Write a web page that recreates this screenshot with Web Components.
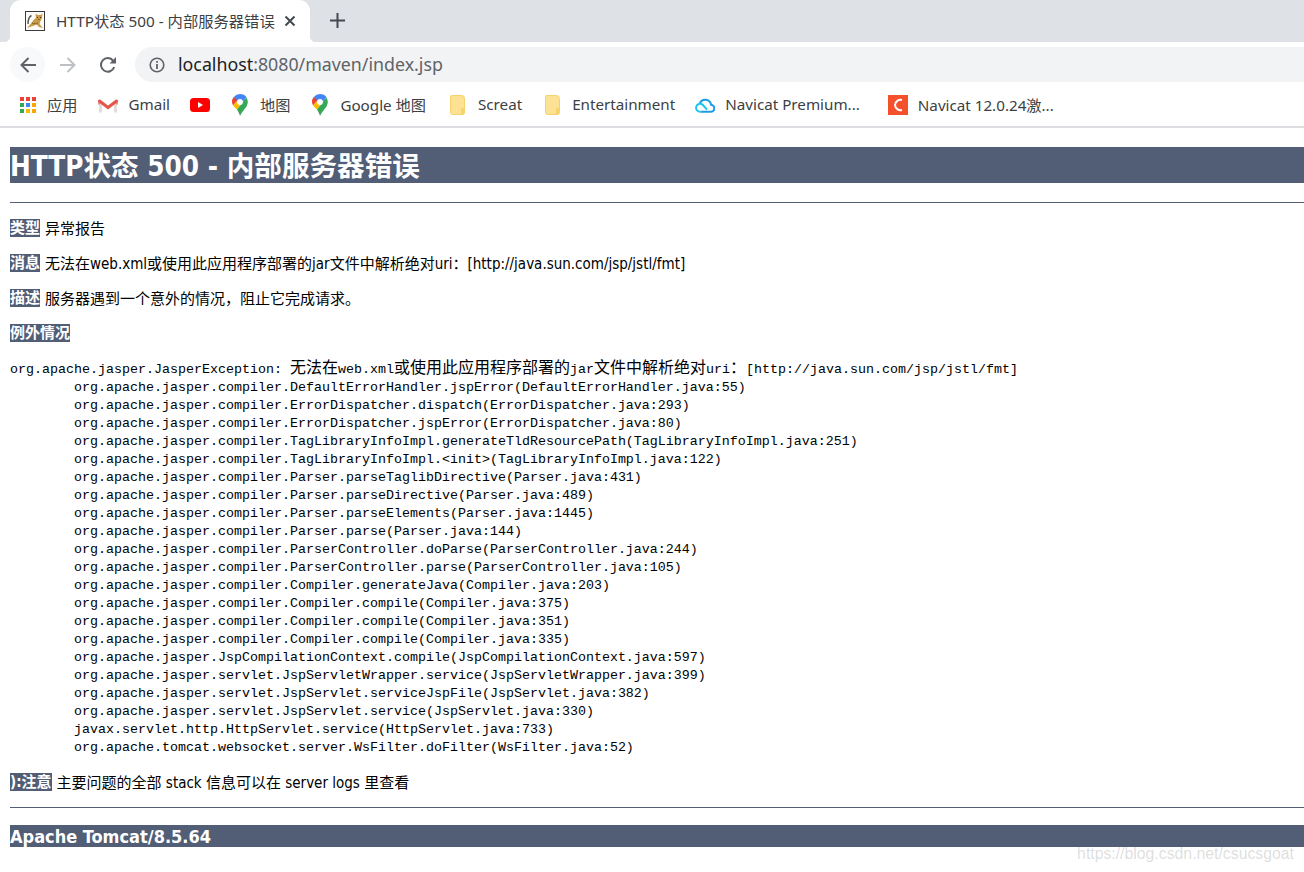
<!DOCTYPE html>
<html lang="zh">
<head>
<meta charset="utf-8">
<title>HTTP状态 500 - 内部服务器错误</title>
<style>
    html, body { margin: 0; padding: 0; background: #fff; overflow: hidden; height: 872px; }
    body { position: relative; }
</style>
</head>
<body>
<browser-tabs></browser-tabs>
<browser-toolbar></browser-toolbar>
<browser-bookmarks></browser-bookmarks>
<error-page></error-page>
<page-watermark>https://blog.csdn.net/csucsgoat</page-watermark>

<script>
const UI_FONT = `"Noto Sans", "Noto Sans CJK SC", sans-serif`;
const PAGE_FONT = `"DejaVu Sans Condensed", "Noto Sans CJK SC", sans-serif`;

const MAPS_PIN = `
    <svg width="16" height="22" viewBox="0 0 16 22">
        <path d="M8 0a8 8 0 0 1 6.500 3.300L11 8 8 5z" fill="#4285f4"/>
        <path d="M1.800 2.900A8 8 0 0 1 8 0V5L5 8z" fill="#4285f4"/>
        <path d="M1.800 2.900 5.300 6.500 1 11.500C-.5 8.500-.4 5.200 1.800 2.900z" fill="#ea4335"/>
        <path d="M1 11.300 5.500 7 8 11.500 5 15.500C3.400 14.200 1.900 13 1 11.300z" fill="#fbbc04"/>
        <path d="M5 15.500 14.500 3.500C16.500 7 16 10.500 13.800 13.400 11.800 16 9.300 18.500 8 22 7.400 19.700 6.300 17.500 5 15.500z" fill="#34a853"/>
        <circle cx="8" cy="8" r="2.900" fill="#fff"/>
    </svg>`;

const FOLDER = `
    <svg width="15" height="20" viewBox="0 0 15 20">
        <path d="M1.500 .5h10a3 3 0 0 1 3 3V17.500a2 2 0 0 1-2 2h-10a2 2 0 0 1-2-2V1.500a1 1 0 0 1 1-1z" fill="#fde293" stroke="#f6d268"/>
        <path d="M14.500 14v3.500a2 2 0 0 1-2 2H11v-3.500a1.500 1.500 0 0 1 3.500-2z" fill="#f6d268"/>
    </svg>`;

const BOOKMARK_ICONS = {
    apps: `<svg width="16" height="16" viewBox="0 0 16 16">
        <rect x="0" y="0" width="4" height="4" fill="#ea4335"/><rect x="6" y="0" width="4" height="4" fill="#ea4335"/><rect x="12" y="0" width="4" height="4" fill="#ea4335"/>
        <rect x="0" y="6" width="4" height="4" fill="#34a853"/><rect x="6" y="6" width="4" height="4" fill="#4285f4"/><rect x="12" y="6" width="4" height="4" fill="#fba707"/>
        <rect x="0" y="12" width="4" height="4" fill="#34a853"/><rect x="6" y="12" width="4" height="4" fill="#fbbc04"/><rect x="12" y="12" width="4" height="4" fill="#fba707"/>
    </svg>`,
    gmail: `<svg width="20" height="15" viewBox="0 0 20 15">
        <path d="M1 2v12.500h3V5zM19 2v12.500h-3V5z" fill="#e3dcdc"/>
        <path d="M1.500 3 10 9.500 18.500 3" fill="none" stroke="#e5554a" stroke-width="3" stroke-linecap="round"/>
        <path d="M1 2.500v4M19 2.500v4" stroke="#e5554a" stroke-width="2" opacity=".6"/>
    </svg>`,
    youtube: `<svg width="20" height="14" viewBox="0 0 20 14">
        <rect width="20" height="14" rx="3.500" fill="#f00"/>
        <path d="M8 4v6l5-3z" fill="#fff"/>
    </svg>`,
    maps: MAPS_PIN,
    folder: FOLDER,
    cloud: `<svg width="20" height="16" viewBox="0 0 20 16" fill="none" stroke-width="2">
        <path d="M5.500 14.800H15.500a3.500 3.500 0 0 0 .6-7A6 6 0 0 0 4.800 6" stroke="#1e9be8"/>
        <path d="M5.500 14.800a4 4 0 1 1 2-7.200l4.500 5" stroke="#1cc4f0"/>
    </svg>`,
    navicat: `<svg width="20" height="20" viewBox="0 0 20 20">
        <rect width="20" height="20" fill="#f4502c"/>
        <path d="M14 5A5.600 5.600 0 0 0 7 10a5.600 5.600 0 0 0 7 5" fill="none" stroke="#fff" stroke-width="2"/>
    </svg>`
};

class BrowserTabs extends HTMLElement {
    constructor() {
        super();
        this.attachShadow({ mode: 'open' });
        this.shadowRoot.innerHTML = `
            <style>
                :host { display: flex; align-items: flex-end; height: 42px; padding-left: 10px; background: #dee1e6; box-sizing: border-box; font: 15.300px ${UI_FONT}; color: #3c4043; }
                .tab { position: relative; display: flex; align-items: center; width: 300px; height: 42px; box-sizing: border-box; padding: 0 14px 0 15px; background: #fff; border-radius: 11px 11px 0 0; }
                .tab::before, .tab::after { content: ""; position: absolute; bottom: 0; width: 6px; height: 6px; }
                .tab::before { left: -6px; background: radial-gradient(circle at 0 0, #dee1e6 6px, #fff 6.500px); }
                .tab::after { right: -6px; background: radial-gradient(circle at 100% 0, #dee1e6 6px, #fff 6.500px); }
                .title { margin-left: 11px; flex: 1; white-space: nowrap; overflow: hidden; margin-bottom: 2px; }
                .plus { display: block; margin: 0 0 14px 20px; }
                .fav { flex: none; display: block; }
            </style>
            <div class="tab">
                <svg class="fav" width="20" height="20" viewBox="0 0 20 20">
                    <rect x=".5" y=".5" width="19" height="19" fill="#fdfcf8" stroke="#3a3a3a"/>
                    <path d="M3 13C3 9 3.500 6 6.500 4.500" fill="none" stroke="#555" stroke-width="1.400"/>
                    <path d="M2 17 6 12.500 9 8.500 11 7 10.500 2.500 12.500 4h3L17.500 2.500 17 7.500 15.500 10 14.500 13 18 17 14 16 11.500 13.500 8 15z" fill="#c99a48"/>
                    <path d="M12 6.500h1M15 6.500h1M13.500 8.500h1" stroke="#4a3412"/>
                    <path d="M7 12c2 1 4 1 6 0" stroke="#8a6424" fill="none"/>
                </svg>
                <span class="title">HTTP状态 500 - 内部服务器错误</span>
                <svg width="12" height="12" viewBox="0 0 12 12"><path d="M1.500 1.500l9 9M10.500 1.500l-9 9" stroke="#45494e" stroke-width="2"/></svg>
            </div>
            <svg class="plus" width="15" height="15" viewBox="0 0 15 15"><path d="M7.500 0v15M0 7.500h15" stroke="#45494e" stroke-width="2"/></svg>
        `;
    }
}
customElements.define('browser-tabs', BrowserTabs);

class BrowserToolbar extends HTMLElement {
    constructor() {
        super();
        this.attachShadow({ mode: 'open' });
        this.shadowRoot.innerHTML = `
            <style>
                :host { display: flex; align-items: center; height: 44px; padding: 1px 0 0 10px; box-sizing: border-box; background: #fff; }
                .btn { flex: none; width: 35px; height: 35px; border-radius: 50%; display: flex; align-items: center; justify-content: center; margin-right: 5px; }
                .btn.hover { background: #f8f9fa; }
                .omni { flex: 1; display: flex; align-items: center; height: 35px; margin-left: 5px; padding-left: 14px; border-radius: 18px 0 0 18px; background: #f1f3f4; font: 17.800px ${UI_FONT}; white-space: nowrap; }
                .url { margin-left: 13px; color: #5f6368; position: relative; top: -1px; }
                .url b { font-weight: 400; color: #202124; }
            </style>
            <div class="btn hover"><svg width="18" height="18" viewBox="0 0 18 18"><path d="M17 9H2.500M9.500 2 2.500 9l7 7" fill="none" stroke="#5f6368" stroke-width="2"/></svg></div>
            <div class="btn"><svg width="18" height="18" viewBox="0 0 18 18"><path d="M1 9h14.500M8.500 2l7 7-7 7" fill="none" stroke="#bdc1c6" stroke-width="2"/></svg></div>
            <div class="btn"><svg width="18" height="18" viewBox="0 0 18 18"><path d="M15.200 11a6.800 6.800 0 1 1-1-6.200" fill="none" stroke="#5f6368" stroke-width="2"/><path d="M17 1v6.500h-6.500z" fill="#5f6368"/></svg></div>
            <div class="omni">
                <svg width="16" height="16" viewBox="0 0 16 16"><circle cx="8" cy="8" r="6.800" fill="none" stroke="#5f6368" stroke-width="1.600"/><path d="M7.100 7h1.800v5H7.100zM7.100 4h1.800v1.800H7.100z" fill="#5f6368"/></svg>
                <span class="url"><b>localhost</b>:8080/maven/index.jsp</span>
            </div>
        `;
    }
}
customElements.define('browser-toolbar', BrowserToolbar);

class BookmarkItem extends HTMLElement {
    constructor() {
        super();
        this.attachShadow({ mode: 'open' });
        this.shadowRoot.innerHTML = `
            <style>
                :host { display: flex; align-items: center; white-space: nowrap; flex: none; }
                .icon { display: flex; margin-right: var(--gap, 10px); }
                .label { display: block; padding-bottom: 2px; }
            </style>
            <span class="icon"></span><span class="label"><slot></slot></span>
        `;
    }

    connectedCallback() {
        this.shadowRoot.querySelector('.icon').innerHTML = BOOKMARK_ICONS[this.getAttribute('icon')] || '';
    }
}
customElements.define('bookmark-item', BookmarkItem);

class BrowserBookmarks extends HTMLElement {
    constructor() {
        super();
        this.attachShadow({ mode: 'open' });
        this.shadowRoot.innerHTML = `
            <style>
                :host { display: flex; align-items: center; height: 42px; padding: 0 0 2px 20px; box-sizing: border-box; border-bottom: 2px solid #dcdde0; background: #fff; font: 15.200px ${UI_FONT}; color: #3c4043; }
            </style>
            <bookmark-item icon="apps" style="--gap:11px;margin-right:21px">应用</bookmark-item>
            <bookmark-item icon="gmail" style="margin-right:20px">Gmail</bookmark-item>
            <bookmark-item icon="youtube" style="--gap:0;margin-right:22px"></bookmark-item>
            <bookmark-item icon="maps" style="--gap:12px;margin-right:22px">地图</bookmark-item>
            <bookmark-item icon="maps" style="--gap:12px;margin-right:24px">Google 地图</bookmark-item>
            <bookmark-item icon="folder" style="--gap:13px;margin-right:23px">Screat</bookmark-item>
            <bookmark-item icon="folder" style="--gap:12px;margin-right:20px">Entertainment</bookmark-item>
            <bookmark-item icon="cloud" style="margin-right:28px">Navicat Premium...</bookmark-item>
            <bookmark-item icon="navicat">Navicat 12.0.24激...</bookmark-item>
        `;
    }
}
customElements.define('browser-bookmarks', BrowserBookmarks);

const STACK = [
    'org.apache.jasper.compiler.DefaultErrorHandler.jspError(DefaultErrorHandler.java:55)',
    'org.apache.jasper.compiler.ErrorDispatcher.dispatch(ErrorDispatcher.java:293)',
    'org.apache.jasper.compiler.ErrorDispatcher.jspError(ErrorDispatcher.java:80)',
    'org.apache.jasper.compiler.TagLibraryInfoImpl.generateTldResourcePath(TagLibraryInfoImpl.java:251)',
    'org.apache.jasper.compiler.TagLibraryInfoImpl.&lt;init&gt;(TagLibraryInfoImpl.java:122)',
    'org.apache.jasper.compiler.Parser.parseTaglibDirective(Parser.java:431)',
    'org.apache.jasper.compiler.Parser.parseDirective(Parser.java:489)',
    'org.apache.jasper.compiler.Parser.parseElements(Parser.java:1445)',
    'org.apache.jasper.compiler.Parser.parse(Parser.java:144)',
    'org.apache.jasper.compiler.ParserController.doParse(ParserController.java:244)',
    'org.apache.jasper.compiler.ParserController.parse(ParserController.java:105)',
    'org.apache.jasper.compiler.Compiler.generateJava(Compiler.java:203)',
    'org.apache.jasper.compiler.Compiler.compile(Compiler.java:375)',
    'org.apache.jasper.compiler.Compiler.compile(Compiler.java:351)',
    'org.apache.jasper.compiler.Compiler.compile(Compiler.java:335)',
    'org.apache.jasper.JspCompilationContext.compile(JspCompilationContext.java:597)',
    'org.apache.jasper.servlet.JspServletWrapper.service(JspServletWrapper.java:399)',
    'org.apache.jasper.servlet.JspServlet.serviceJspFile(JspServlet.java:382)',
    'org.apache.jasper.servlet.JspServlet.service(JspServlet.java:330)',
    'javax.servlet.http.HttpServlet.service(HttpServlet.java:733)',
    'org.apache.tomcat.websocket.server.WsFilter.doFilter(WsFilter.java:52)'
];

class StackTrace extends HTMLElement {
    constructor() {
        super();
        this.attachShadow({ mode: 'open' });
        const rows = STACK.map(line => `<div class="row">${line}</div>`).join('');
        this.shadowRoot.innerHTML = `
            <style>
                :host { display: block; font: 13.330px/18px "Liberation Mono", "Noto Sans CJK SC", monospace; color: #000; white-space: nowrap; }
                .row { height: 18px; padding-left: 64px; }
                .first { height: 18px; }
                .cjk { font-size: 16px; font-family: "Noto Sans CJK SC", sans-serif; line-height: 0; }
            </style>
            <div class="first">org.apache.jasper.JasperException: <span class="cjk">无法在</span>web.xml<span class="cjk">或使用此应用程序部署的</span>jar<span class="cjk">文件中解析绝对</span>uri<span class="cjk">：</span>[http://java.sun.com/jsp/jstl/fmt]</div>
            ${rows}
        `;
    }
}
customElements.define('stack-trace', StackTrace);

class InfoLine extends HTMLElement {
    constructor() {
        super();
        this.attachShadow({ mode: 'open' });
        this.shadowRoot.innerHTML = `
            <style>
                :host { display: block; height: 20px; line-height: 20px; font-size: 15px; white-space: nowrap; }
                b { display: inline-block; height: 18px; line-height: 18px; background: #525d76; color: #fff; font-weight: 700; margin-right: 5px; vertical-align: 1px; }
            </style>
            <b><slot name="label"></slot></b><slot></slot>
        `;
    }
}
customElements.define('info-line', InfoLine);

class ErrorPage extends HTMLElement {
    constructor() {
        super();
        this.attachShadow({ mode: 'open' });
        this.shadowRoot.innerHTML = `
            <style>
                :host { display: block; padding: 19px 0 0 10px; font-family: ${PAGE_FONT}; color: #000; }
                h1 { margin: 0; height: 36px; background: #525d76; color: #fff; font: 700 27.600px/39px ${PAGE_FONT}; white-space: nowrap; }
                hr { margin: 0; height: 1px; border: 0; background: #525d76; }
                .top-rule { margin: 19px 0 16px; }
                info-line + info-line { margin-top: 15px; }
                stack-trace { margin-top: 17px; }
                stack-trace + info-line { margin-top: 16px; }
                .bottom-rule { margin: 14px 0 17px; }
                h3 { margin: 0; height: 22px; background: #525d76; color: #fff; font: 700 18px/24px ${PAGE_FONT}; }
            </style>
            <h1>HTTP状态 500 - 内部服务器错误</h1>
            <hr class="top-rule">
            <info-line><span slot="label">类型</span>异常报告</info-line>
            <info-line><span slot="label">消息</span>无法在web.xml或使用此应用程序部署的jar文件中解析绝对uri：[http://java.sun.com/jsp/jstl/fmt]</info-line>
            <info-line><span slot="label">描述</span>服务器遇到一个意外的情况，阻止它完成请求。</info-line>
            <info-line><span slot="label">例外情况</span></info-line>
            <stack-trace></stack-trace>
            <info-line><span slot="label">):注意</span>主要问题的全部 stack 信息可以在 server logs 里查看</info-line>
            <hr class="bottom-rule">
            <h3>Apache Tomcat/8.5.64</h3>
        `;
    }
}
customElements.define('error-page', ErrorPage);

class PageWatermark extends HTMLElement {
    constructor() {
        super();
        this.attachShadow({ mode: 'open' });
        this.shadowRoot.innerHTML = `
            <style>
                :host { position: absolute; right: 10px; top: 844px; font: 15.800px/20px "Liberation Sans", sans-serif; color: rgba(120, 120, 120, .25); white-space: nowrap; }
            </style>
            <slot></slot>
        `;
    }
}
customElements.define('page-watermark', PageWatermark);
</script>
</body>
</html>
